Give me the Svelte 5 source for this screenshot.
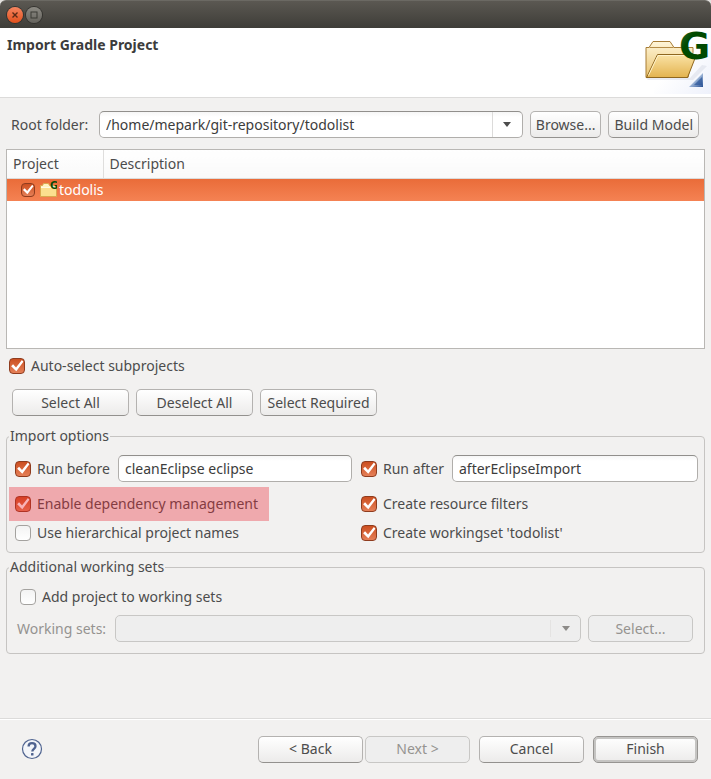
<script>
  let root = $state('/home/mepark/git-repository/todolist');
  let before = $state('cleanEclipse eclipse');
  let after = $state('afterEclipseImport');
  let picked = $state(true);
  let autoSelect = $state(true);
  let runBefore = $state(true);
  let runAfter = $state(true);
  let dependencies = $state(true);
  let filters = $state(true);
  let hierarchical = $state(false);
  let workingset = $state(true);
  let addToSets = $state(false);
</script>

<div class="dialog">
  <div class="titlebar">
    <button class="win close" aria-label="Close">
      <svg width="16" height="16" viewBox="0 0 16 16"><path d="M5.5 5.5l5 5M10.5 5.5l-5 5" stroke="#5a2a16" stroke-width="1.4" /></svg>
    </button>
    <button class="win" aria-label="Maximize">
      <svg width="16" height="16" viewBox="0 0 16 16"><rect x="5" y="5" width="6" height="6" fill="none" stroke="#3b3a35" /></svg>
    </button>
  </div>

  <header>
    <h1>Import Gradle Project</h1>
    <svg class="banner" width="71" height="69" viewBox="0 0 71 69" aria-hidden="true">
      <defs>
        <linearGradient id="back" x1="0" y1="0" x2="0" y2="1"><stop offset="0" stop-color="#fff6d9" /><stop offset="1" stop-color="#e9c26d" /></linearGradient>
        <linearGradient id="front" x1="0" y1="0" x2="0" y2="1"><stop offset="0" stop-color="#fae3a6" /><stop offset="1" stop-color="#e3b34f" /></linearGradient>
        <linearGradient id="haze" x1="0" y1="0" x2="1" y2="1"><stop offset=".45" stop-color="#fff" /><stop offset="1" stop-color="#eef1fb" /></linearGradient>
        <linearGradient id="tri" x1="0" y1="0" x2="1" y2="1"><stop offset=".35" stop-color="#c3d5ec" /><stop offset="1" stop-color="#275094" /></linearGradient>
        <linearGradient id="gee" x1="0" y1="0" x2="1" y2="1"><stop offset="0" stop-color="#3c703b" /><stop offset=".35" stop-color="#004a00" /><stop offset="1" stop-color="#004800" /></linearGradient>
      </defs>
      <path d="M14 0h57v66H14z" fill="url(#haze)" />
      <path d="M6 50h44l12-13 5 1-14 14H8z" fill="#dcdfe9" opacity=".6" />
      <path d="M6 49.500V19.500h3l4-6h17l4 6h19v5L48 49.500z" fill="url(#back)" stroke="#a77c35" />
      <path d="M9.500 19.500h24" stroke="#b58c47" />
      <path d="M6.500 49.500l11-23h39l-9 23z" fill="url(#front)" stroke="#8f671f" />
      <path d="M8.500 47.500l9.500-20h37" fill="none" stroke="#fff3cb" />
      <text x="39" y="31" font-family="DejaVu Sans, sans-serif" font-weight="700" font-size="38" fill="url(#gee)">G</text>
      <path d="M49 59l14-14v14z" fill="url(#tri)" />
      <path d="M54 57l8-8v8z" fill="#295396" opacity=".65" />
    </svg>
  </header>

  <main>
    <div class="root-row">
      <label for="root">Root folder:</label>
      <div class="combo">
        <input id="root" type="text" bind:value={root} />
        <button class="drop" aria-label="Recent folders"><span class="arrow"></span></button>
      </div>
      <button class="btn snug">Browse...</button>
      <button class="btn snug">Build Model</button>
    </div>

    <div class="tree">
      <table>
        <thead>
          <tr><th class="first">Project</th><th>Description</th></tr>
        </thead>
        <tbody>
          <tr>
            <td class="first">
              <label class="item">
                <input type="checkbox" bind:checked={picked} />
                <svg width="17" height="17" viewBox="0 0 17 17" aria-hidden="true">
                  <path d="M.5 15.500v-11h2l1-2h5l1 2h7v11z" fill="#fff3c2" stroke="#d9a94f" />
                  <path d="M1 7h15v8H1z" fill="#fbdf8e" />
                  <path d="M1 6.500h15" stroke="#fffbe3" />
                  <text x="10" y="8" font-family="DejaVu Sans, sans-serif" font-weight="700" font-size="10" fill="#0b4a08">G</text>
                </svg>
                <span>todolist</span>
              </label>
            </td>
            <td></td>
          </tr>
        </tbody>
      </table>
    </div>

    <label class="check auto"><input type="checkbox" bind:checked={autoSelect} />Auto-select subprojects</label>

    <div class="select-row">
      <button class="btn">Select All</button>
      <button class="btn">Deselect All</button>
      <button class="btn">Select Required</button>
    </div>

    <fieldset>
      <legend>Import options</legend>
      <div class="options">
        <div class="run">
          <label class="check before"><input type="checkbox" bind:checked={runBefore} />Run before</label>
          <input class="text" type="text" aria-label="Tasks to run before" bind:value={before} />
        </div>
        <div class="run">
          <label class="check after"><input type="checkbox" bind:checked={runAfter} />Run after</label>
          <input class="text" type="text" aria-label="Tasks to run after" bind:value={after} />
        </div>
        <label class="check marked"><input type="checkbox" bind:checked={dependencies} />Enable dependency management</label>
        <label class="check"><input type="checkbox" bind:checked={filters} />Create resource filters</label>
        <label class="check"><input type="checkbox" bind:checked={hierarchical} />Use hierarchical project names</label>
        <label class="check"><input type="checkbox" bind:checked={workingset} />Create workingset 'todolist'</label>
      </div>
    </fieldset>

    <fieldset>
      <legend>Additional working sets</legend>
      <div class="sets">
        <label class="check add"><input type="checkbox" bind:checked={addToSets} />Add project to working sets</label>
        <div class="sets-row">
          <label for="sets">Working sets:</label>
          <div class="combo off">
            <select id="sets" disabled={!addToSets}><option></option></select>
            <span class="drop"><span class="arrow"></span></span>
          </div>
          <button class="btn wide" disabled={!addToSets}>Select...</button>
        </div>
      </div>
    </fieldset>
  </main>

  <footer>
    <button class="help" aria-label="Help">
      <svg width="22" height="22" viewBox="0 0 22 22">
        <circle cx="11" cy="11" r="9.500" fill="#f3f5f9" stroke="#506490" stroke-width="1.200" />
        <path d="M7.600 8.400C7.600 6.200 9 5.200 11 5.200s3.500 1.100 3.500 3c0 2.600-3.200 2.600-3.200 5.300" fill="none" stroke="#4f6390" stroke-width="2.300" />
        <rect x="10" y="15" width="2.500" height="2.500" rx=".6" fill="#4f6390" />
      </svg>
    </button>
    <div class="nav">
      <button class="btn wide">&lt; Back</button>
      <button class="btn wide" disabled>Next &gt;</button>
    </div>
    <button class="btn wide">Cancel</button>
    <button class="btn wide default">Finish</button>
  </footer>
</div>

<style>
  :global(body) { margin: 0; background: #f2f1f0; }
  .dialog, .dialog * { box-sizing: border-box; }
  .dialog {
    display: flex;
    flex-direction: column;
    min-height: 100vh;
    background: #f2f1f0;
    color: #4c4c4c;
    font: 14px/20px "Noto Sans", "Open Sans", sans-serif;
  }
  button, input, select { font: inherit; color: inherit; margin: 0; }

  .titlebar {
    display: flex;
    align-items: center;
    gap: 3px;
    height: 28px;
    padding: 0 7px;
    border-top: 1px solid #6b6963;
    border-radius: 6px 6px 0 0;
    background: linear-gradient(#5b5852, #3e3d38);
    box-shadow: 0 -6px 0 0 #e4e2df;
  }
  .win {
    width: 16px;
    height: 16px;
    padding: 0;
    border: 0;
    border-radius: 50%;
    background: linear-gradient(#8c8a83, #65635d);
    box-shadow: 0 0 0 1px #34332f;
  }
  .win svg { display: block; }
  .close { background: linear-gradient(#f58560, #e2501c); }

  header {
    display: flex;
    justify-content: space-between;
    height: 70px;
    padding-left: 7px;
    background: #fff;
    border-bottom: 1px solid #dcdbda;
  }
  h1 { margin: 7px 0 0; font-size: 14px; line-height: 20px; font-weight: 700; color: #3c3c3c; }
  .banner { display: block; }

  main { flex: 1; padding: 13px 6px 0; }

  .root-row { display: flex; align-items: center; gap: 7px; padding: 0 6px 0 5px; }
  .root-row label { flex: 0 0 81px; white-space: nowrap; }
  .combo {
    display: flex;
    flex: 1;
    height: 27px;
    border: 1px solid #b0aeab;
    border-top-color: #918f8c;
    border-radius: 5px;
    background: linear-gradient(#f6f6f6, #fff 5px);
  }
  .combo input, .combo select {
    flex: 1;
    min-width: 0;
    padding: 0 6px;
    border: 0;
    outline: 0;
    background: none;
    color: #3c3c3c;
    appearance: none;
  }
  .drop {
    display: flex;
    align-items: center;
    justify-content: center;
    width: 30px;
    padding: 0;
    border: 0;
    border-left: 1px solid #dcdbda;
    background: none;
  }
  .arrow { border: 4px solid transparent; border-top: 5px solid #4c4c4c; border-bottom: 0; }
  .off { background: #eeeeee; border-color: #c8c7c5; }
  .off .drop { margin: 4px 0; border-color: #e4e3e2; }
  .off .arrow { border-top-color: #8d8b88; }

  .btn {
    width: 117px;
    height: 27px;
    padding: 0;
    border: 1px solid #b4b2b0;
    border-bottom-color: #93918e;
    border-radius: 5px;
    background: linear-gradient(#fff, #ecebea);
    white-space: nowrap;
  }
  .btn:disabled { background: #eeeeee; border-color: #c8c7c5; color: #959390; }
  .snug { width: auto; padding: 0 5px; }
  .wide { width: 105px; }
  .default { border-color: #979592; box-shadow: inset 0 0 0 2px #c5c4c2; }

  .tree {
    height: 200px;
    margin-top: 11px;
    border: 1px solid #b9b7b4;
    background: #fff;
  }
  table { width: 100%; border-collapse: collapse; table-layout: fixed; }
  th {
    height: 28px;
    padding: 0 6px;
    border-bottom: 1px solid #dcdbda;
    background: linear-gradient(#fff, #f9f9f9);
    text-align: left;
    font-weight: 400;
  }
  .first { width: 96px; }
  th.first { border-right: 1px solid #dfdedd; }
  td { height: 23px; padding: 0; overflow: hidden; }
  tbody tr { background: linear-gradient(#e96b38, #f58253); color: #fff; }
  .item { display: flex; align-items: center; padding-left: 14px; white-space: nowrap; }
  .item svg { flex: none; margin: 0 2px 0 5px; }

  input[type='checkbox'] {
    flex: none;
    width: 16px;
    height: 16px;
    appearance: none;
    border: 1px solid #a4a29f;
    border-radius: 4px;
    background: linear-gradient(#f3f3f3, #fff);
  }
  input[type='checkbox']:checked {
    border-color: #8f3c1e;
    background: linear-gradient(#cc4f20, #e58058);
  }
  input[type='checkbox']:checked::before {
    content: '';
    display: block;
    width: 100%;
    height: 100%;
    background: #fff;
    clip-path: polygon(8% 52%, 22% 38%, 43% 60%, 85% 8%, 96% 20%, 45% 88%);
  }
  .item input[type='checkbox'] { width: 14px; height: 14px; }

  .check { display: flex; align-items: center; gap: 6px; white-space: nowrap; }
  .auto { width: fit-content; margin: 7px 0 0 3px; }
  .select-row { display: flex; gap: 7px; margin: 13px 0 10px; padding-left: 6px; }

  fieldset { min-width: 0; margin: 0 0 4px; padding: 0; border: 1px solid #c6c4c2; border-radius: 4px; }
  legend { margin-left: 2px; padding: 0 1px; }
  .options {
    display: grid;
    grid-template-columns: 1fr 1fr;
    gap: 0 9px;
    padding: 9px 6px 7px 8px;
  }
  .options .check { height: 20px; }
  .run { display: flex; align-items: center; gap: 7px; height: 27px; margin-bottom: 5px; }
  .before { flex: 0 0 96px; }
  .after { flex: 0 0 84px; }
  .text {
    flex: 1;
    min-width: 0;
    height: 27px;
    padding: 0 6px;
    border: 1px solid #b0aeab;
    border-top-color: #918f8c;
    border-radius: 5px;
    background: linear-gradient(#f6f6f6, #fff 5px);
    color: #3c3c3c;
  }
  .options > .check { height: 24px; }
  .options > .marked { height: 34px; }
  .options > .marked + .check { height: 34px; }
  .marked { position: relative; justify-self: start; margin-left: -6px; padding: 0 11px 0 6px; }
  .marked::after { content: ''; position: absolute; inset: 0; background: rgba(236, 35, 49, 0.35); }

  .sets { padding: 10px 11px 11px 10px; }
  .add { width: fit-content; margin-left: 3px; }
  .sets-row { display: flex; align-items: center; gap: 7px; margin-top: 8px; }
  .sets-row label { flex: 0 0 91px; white-space: nowrap; color: #959390; }

  footer {
    display: flex;
    align-items: center;
    gap: 9px;
    height: 61px;
    padding: 0 13px 0 21px;
    border-top: 1px solid #dcdbda;
    box-shadow: inset 0 1px 0 #fff;
  }
  .help { margin-right: auto; padding: 0; border: 0; background: none; }
  .help svg { display: block; }
  .nav { display: flex; gap: 2px; }
</style>
